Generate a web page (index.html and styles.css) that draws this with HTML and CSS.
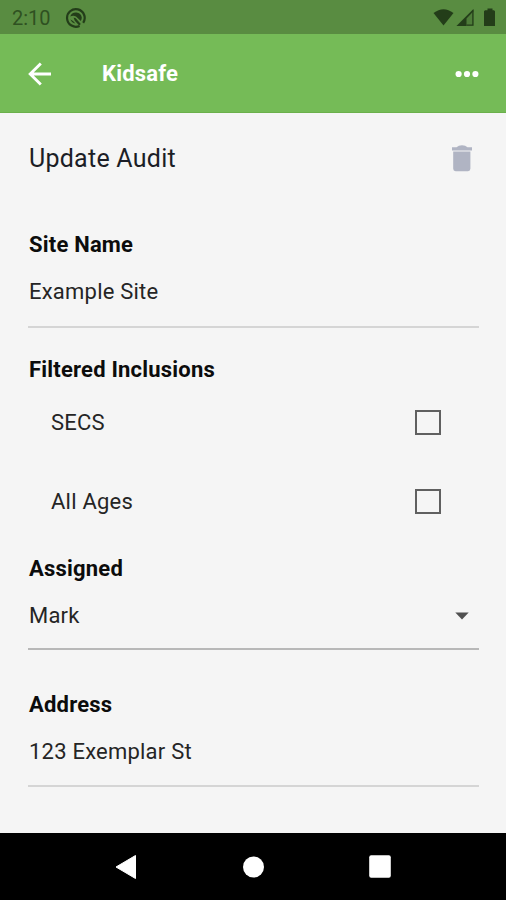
FILE: index.html
```html
<!DOCTYPE html>
<html lang="en">
<head>
<meta charset="utf-8">
<title>Kidsafe</title>
<link rel="stylesheet" href="styles.css">
</head>
<body>
<div class="status">
  <span class="clock">2:10</span>
  <svg class="status-app" width="22" height="22" viewBox="0 0 22 22"><path d="M14.6 18.9A8.8 8.8 0 1 1 18.2 15.8" fill="none" stroke="currentColor" stroke-width="2.2"/><path d="M5.2 9.6A6 6 0 0 1 16.8 10.6Q16.8 12.6 15.8 14L11 9.4Q8 7.8 5.2 9.6ZM8.6 10.8Q10.4 10.6 11.4 12L15.8 17 14.2 18.4 9.8 13.8ZM5.4 12.6Q6.8 16 10.4 16.6L8 14Z" fill="currentColor"/></svg>
  <svg class="status-icons" width="64" height="22" viewBox="0 0 64 22"><path d="M1.5 6Q11.5-1.6 21.5 6L11.5 18.5Z" fill="currentColor"/><path d="M24.5 19L41.5 2V19Z" fill="currentColor" opacity=".2"/><path d="M24.5 19L41.5 2V4.3L34.5 11.5V19Z" fill="currentColor"/><path d="M34.5 18.2H40.9V3.5" fill="none" stroke="currentColor" stroke-width="1.3"/><path d="M53 3.3H55.5V1.5H60.5V3.3H62L63 4.3V19H52V4.3Z" fill="currentColor"/></svg>
</div>
<header class="appbar">
  <svg class="back" width="24" height="24" viewBox="0 0 24 24"><path d="M12.8 1.5L2.2 12L12.8 22.5M2.5 12H23" fill="none" stroke="currentColor" stroke-width="2.9"/></svg>
  <span class="brand">Kidsafe</span>
  <svg class="more" width="24" height="8" viewBox="0 0 24 8"><circle cx="3.6" cy="4" r="3.1"/><circle cx="12" cy="4" r="3.1"/><circle cx="20.4" cy="4" r="3.1"/></svg>
</header>
<main class="content">
  <div class="title-row">
    <h1 class="title">Update Audit</h1>
    <svg class="trash" width="20" height="27" viewBox="0 0 20 27"><path d="M0 2.2H4.5Q6.5.3 10 .3T15.5 2.2H20V5.4H0ZM1.2 6.6H18.4V23.8Q18.4 26.2 16 26.2H3.6Q1.2 26.2 1.2 23.8Z" fill="currentColor"/></svg>
  </div>
  <section class="field site">
    <h2 class="label">Site Name</h2>
    <div class="value">Example Site</div>
  </section>
  <section class="filters">
    <h2 class="label">Filtered Inclusions</h2>
    <div class="option"><span>SECS</span><span class="box"></span></div>
    <div class="option"><span>All Ages</span><span class="box"></span></div>
  </section>
  <section class="field assigned">
    <h2 class="label">Assigned</h2>
    <div class="value select"><span>Mark</span><svg class="caret" width="14" height="8" viewBox="0 0 14 8"><path d="M.3.5H13.7L7 7.5Z" fill="currentColor"/></svg></div>
  </section>
  <section class="field address">
    <h2 class="label">Address</h2>
    <div class="value">123 Exemplar St</div>
  </section>
</main>
<nav class="nav">
  <svg width="22" height="26" viewBox="0 0 22 26"><path d="M1 13L20.5 1.5V24.5Z" fill="#fff" stroke="#fff" stroke-linejoin="round"/></svg>
  <svg width="22" height="22" viewBox="0 0 22 22"><circle cx="11.5" cy="11" r="10.5" fill="#fff"/></svg>
  <svg width="22" height="23" viewBox="0 0 22 23"><rect x=".2" y=".3" width="21.6" height="22.4" rx="2" fill="#fff"/></svg>
</nav>
</body>
</html>
```
FILE: styles.css
```css
* { box-sizing: border-box; }
body {
  margin: 0;
  height: 900px;
  display: flex;
  flex-direction: column;
  overflow: hidden;
  background: #f5f5f5;
  color: #0c0c0c;
  font-family: Roboto, sans-serif;
}
svg { display: block; flex: none; }
.status {
  height: 34px;
  display: flex;
  align-items: center;
  padding: 1px 10px 0 12px;
  background: #598c41;
  color: #233d19;
}
.clock { font-size: 20px; line-height: 24px; padding-top: 1px; color: #2f5121; }
.status-app { margin-left: 14px; }
.status-icons { margin-left: auto; }
.appbar {
  height: 79px;
  display: flex;
  align-items: center;
  padding: 1px 27px 0 28px;
  background: #75bb57;
  border-bottom: 1px solid #6bb04b;
  color: #fff;
}
.brand { margin-left: 50px; font-size: 22px; letter-spacing: .2px; font-weight: 700; }
.more { margin-left: auto; fill: #fff; }
.content { flex: 1; padding: 0 27px 0 28px; }
.title-row {
  height: 90px;
  display: flex;
  align-items: center;
  justify-content: space-between;
  padding: 0 7px 0 1px;
}
.title { margin: 0; font-size: 25px; font-weight: 400; letter-spacing: .25px; color: #1c1e26; }
.trash { color: #b0b4c3; }
.label { margin: 0; padding-left: 1px; font-size: 22px; line-height: 26px; font-weight: 700; letter-spacing: .2px; }
.value { height: 70px; padding: 21px 0 0 1px; font-size: 22px; line-height: 26px; letter-spacing: .22px; color: #252525; border-bottom: 2px solid #d5d5d5; }
.site { padding-top: 29px; }
.filters { padding-top: 29px; }
.option { height: 79px; display: flex; align-items: center; justify-content: space-between; padding: 0 38px 0 23px; font-size: 22px; letter-spacing: .22px; color: #252525; }
.box { width: 26px; height: 25px; margin-bottom: 1px; border: 2px solid #606060; }
.assigned { padding-top: 15px; }
.select { height: 68px; display: flex; justify-content: space-between; border-color: #b8b8b8; }
.caret { margin: 9px 10px 0 0; color: #505050; }
.address { padding-top: 42px; }
.address .value { height: 69px; }
.nav {
  height: 67px;
  display: flex;
  align-items: center;
  justify-content: space-between;
  padding: 0 115px;
  background: #000;
}
```
